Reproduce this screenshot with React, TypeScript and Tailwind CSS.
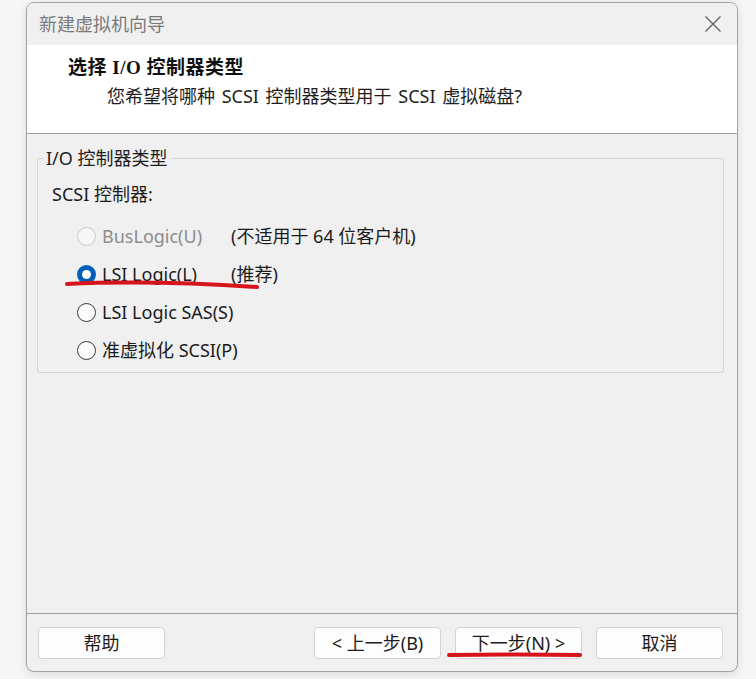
import React from "react";

const FONT = { fontFamily: '"Noto Sans", "Noto Sans CJK SC", sans-serif' };

type RadioState = "off" | "on" | "disabled";

function Radio({ state }: { state: RadioState }) {
  if (state === "on")
    return (
      <div className="w-[19px] h-[19px] rounded-full bg-[#005fb8] flex items-center justify-center">
        <div className="w-[9px] h-[9px] rounded-full bg-white" />
      </div>
    );
  return (
    <div
      className={`w-[19px] h-[19px] rounded-full border ${
        state === "disabled" ? "border-[#cacaca] bg-[#f6f6f6]" : "border-[#3a3a3a] bg-[#fbfbfb]"
      }`}
    />
  );
}

const OPTIONS: { label: string; note?: string; state: RadioState }[] = [
  { label: "BusLogic(U)", note: "(不适用于 64 位客户机)", state: "disabled" },
  { label: "LSI Logic(L)", note: "(推荐)", state: "on" },
  { label: "LSI Logic SAS(S)", state: "off" },
  { label: "准虚拟化 SCSI(P)", state: "off" },
];

function Btn({ children }: { children: React.ReactNode }) {
  return (
    <button className="w-[127px] h-[32px] rounded-[4px] border border-[#d3d3d3] bg-[#fdfdfd] text-[18px] text-[#1b1b1b] whitespace-nowrap flex items-center justify-center">
      {children}
    </button>
  );
}

export default function App() {
  return (
    <div className="relative w-[756px] h-[679px] bg-[#f6f6f6] overflow-hidden" style={FONT}>
      {/* dialog window */}
      <div className="absolute left-[26px] top-[2px] w-[712px] h-[670px] rounded-[8px] border border-[#a3a3a3] bg-[#f0f0f0] shadow-[0_2px_10px_rgba(0,0,0,0.12)] flex flex-col overflow-hidden">
        {/* title bar */}
        <div className="h-[42px] flex items-center justify-between pl-[12px] pr-[15px] bg-[#f0f0f0]">
          <span className="text-[18px] text-[#7a7a7a]">新建虚拟机向导</span>
          <svg width="18" height="18" viewBox="0 0 18 18">
            <path d="M1.5 1.5 L16.5 16.5 M16.5 1.5 L1.5 16.5" stroke="#5c5c5c" strokeWidth="1.2" fill="none" />
          </svg>
        </div>

        {/* header */}
        <div className="h-[89px] bg-white border-b border-[#a0a0a0] pt-[11px]">
          <div
            className="pl-[41px] text-[19px] leading-[24px] font-bold text-[#111] tracking-[0.5px]"
            style={{ fontFamily: '"Liberation Serif", "Noto Sans CJK SC", serif' }}
          >
            选择 I/O 控制器类型
          </div>
          <div className="pl-[80px] mt-[4px] text-[18px] leading-[24px] text-[#1e1e1e] [word-spacing:2px]">
            您希望将哪种 SCSI 控制器类型用于 SCSI 虚拟磁盘?
          </div>
        </div>

        {/* body */}
        <div className="flex-1 pt-[12px] pl-[10px] pr-[13px]">
          <fieldset className="border border-[#d6d6d6] rounded-[2px] pl-[14px] pt-[12px] pb-[3px]">
            <legend className="ml-[-9px] px-[3px] text-[18px] leading-[24px] text-[#1e1e1e]">I/O 控制器类型</legend>
            <div className="text-[18px] leading-[24px] text-[#1b1b1b]">SCSI 控制器:</div>
            <div className="mt-[11px] flex flex-col">
              {OPTIONS.map((o) => (
                <div key={o.label} className="h-[38px] flex items-center text-[18px] whitespace-nowrap">
                  <div className="ml-[25px] mr-[6px] shrink-0">
                    <Radio state={o.state} />
                  </div>
                  <span
                    className={`min-w-[129px] shrink-0 ${o.state === "disabled" ? "text-[#8c8c8c]" : "text-[#1b1b1b]"}`}
                  >
                    {o.label}
                  </span>
                  {o.note && <span className="text-[#1b1b1b]">{o.note}</span>}
                </div>
              ))}
            </div>
          </fieldset>
        </div>

        {/* footer */}
        <div className="border-t border-[#a0a0a0] pt-[13px] pb-[12px] pl-[11px] pr-[14px] flex items-center">
          <Btn>帮助</Btn>
          <div className="ml-auto flex gap-[14px]">
            <Btn>&lt; 上一步(B)</Btn>
            <Btn>下一步(N) &gt;</Btn>
            <Btn>取消</Btn>
          </div>
        </div>
      </div>

      {/* red annotation strokes */}
      <svg className="absolute left-0 top-0 pointer-events-none" width="756" height="679">
        <path d="M67 284 Q150 280 257 287" stroke="#d7141b" strokeWidth="4" strokeLinecap="round" fill="none" />
        <path d="M449 655 Q515 654 580 655" stroke="#d7141b" strokeWidth="4" strokeLinecap="round" fill="none" />
      </svg>
    </div>
  );
}
